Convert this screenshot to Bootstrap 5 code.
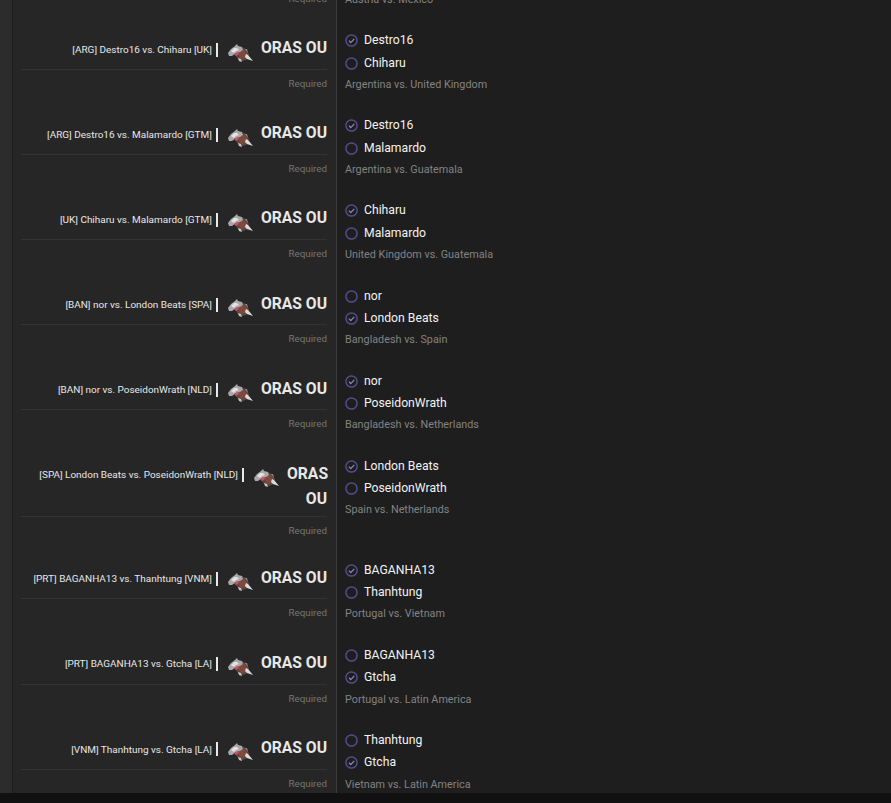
<!DOCTYPE html>
<html lang="en"><head><meta charset="utf-8"><title>Pick'em</title>
<link href="https://cdn.jsdelivr.net/npm/bootstrap@5.3.0/dist/css/bootstrap.min.css" rel="stylesheet">
<style>
html,body{height:100%;overflow:hidden;background:#111}
body{font-family:Roboto,"Noto Sans",sans-serif;color:#f0f0f0}
.shell{height:793px;overflow:hidden;background:#1e1e1e}
.strip{width:13px;background:#2c2c2c;border-right:1px solid #1c1c1c}
.feed{margin-top:-56.1px}
.lhs{width:324px;padding:6.3px 9px 17.7px 8px;background:#262626;border-right:1px solid #3c3c3c}
.rhs{padding:.5px 0 19.1px 8px;flex:1}
.head{min-height:28.7px}
.match{font-size:9.96px;line-height:25px;white-space:nowrap;color:#e8e8e8;padding-right:4px;height:25px;margin-top:1.6px}
.bar{width:2px;height:14px;background:#e8e8e8;margin:7.5px 10px 0 0;flex:none}
.poke{width:25px;height:18px;flex:none;margin:8.5px 8px 0 0}
.fmt{font-size:15.7px;font-weight:700;line-height:25px;color:#e8e8e8;text-align:right}
.fmt-narrow{width:40px;flex:none}
.rule{border-top:1px solid #333;margin:5px 0 4px}
.req{font-size:9.8px;line-height:20px;color:#757575;text-align:right}
.opt{height:22.5px;font-size:12.2px;line-height:23px;color:#f2f2f2;gap:6px}
.opt svg{width:13px;height:13px;flex:none}
.cap{font-size:10.8px;line-height:20px;color:#838383;height:20px;margin-top:.5px}
.foot{height:10px;background:#111}
</style></head><body>
<svg width="0" height="0" class="d-block"><defs>
<symbol id="pk" viewBox="0 0 25 18">
<path fill="#5d4640" d="M9 6l4-3 5 2 3 5-1 5-5 2-5-2-3-4z"/>
<path fill="#7f4a3e" d="M11 7l5-1 3 4-1 4-4 1-3-3z"/>
<path fill="#a9a9a9" d="M0 9l3-4 4-3 2-2 1 2 4 1 1 3-3 2-4 1-4 3-3 0z"/>
<path fill="#e2e2e2" d="M3 7l3-3 3 0 2 2-3 1-2 2z"/>
<path fill="#d14e68" d="M6 10l4-2 1 2-3 2z"/>
<path fill="#dcdcdc" d="M18 10l2 1 5 6-6-2-2-2z"/>
<path fill="#c9c9c9" d="M10 14l3 1 1 3-3-1z"/>
<path fill="#8e8e8e" d="M17 5l2 0 1 4z"/>
</symbol>
<symbol id="off" viewBox="0 0 14 14"><circle cx="7" cy="7" r="6" fill="none" stroke="#524d8c" stroke-width="1.6"/></symbol>
<symbol id="on" viewBox="0 0 14 14"><circle cx="7" cy="7" r="6" fill="none" stroke="#524d8c" stroke-width="1.6"/><path d="M4.2 7.2l2 2 3.8-4" fill="none" stroke="#8f8cb4" stroke-width="1.3"/></symbol>
</defs></svg>
<div class="shell d-flex">
<div class="strip flex-shrink-0"></div>
<div class="feed flex-grow-1">

<div class="d-flex"><div class="lhs"><div class="d-flex justify-content-end head"><span class="match">[AUT] Peligroso vs. Mexico [MEX]</span><span class="bar"></span><svg class="poke"><use href="#pk"/></svg><div class="fmt">ORAS OU</div></div><div class="rule"></div><div class="req">Required</div></div><div class="rhs"><div class="opt d-flex align-items-center"><svg><use href="#on"/></svg>Austria</div><div class="opt d-flex align-items-center"><svg><use href="#off"/></svg>Mexico</div><div class="cap">Austria vs. Mexico</div></div></div>

<div class="d-flex"><div class="lhs"><div class="d-flex justify-content-end head"><span class="match">[ARG] Destro16 vs. Chiharu [UK]</span><span class="bar"></span><svg class="poke"><use href="#pk"/></svg><div class="fmt">ORAS OU</div></div><div class="rule"></div><div class="req">Required</div></div><div class="rhs"><div class="opt d-flex align-items-center"><svg><use href="#on"/></svg>Destro16</div><div class="opt d-flex align-items-center"><svg><use href="#off"/></svg>Chiharu</div><div class="cap">Argentina vs. United Kingdom</div></div></div>

<div class="d-flex"><div class="lhs"><div class="d-flex justify-content-end head"><span class="match">[ARG] Destro16 vs. Malamardo [GTM]</span><span class="bar"></span><svg class="poke"><use href="#pk"/></svg><div class="fmt">ORAS OU</div></div><div class="rule"></div><div class="req">Required</div></div><div class="rhs"><div class="opt d-flex align-items-center"><svg><use href="#on"/></svg>Destro16</div><div class="opt d-flex align-items-center"><svg><use href="#off"/></svg>Malamardo</div><div class="cap">Argentina vs. Guatemala</div></div></div>

<div class="d-flex"><div class="lhs"><div class="d-flex justify-content-end head"><span class="match">[UK] Chiharu vs. Malamardo [GTM]</span><span class="bar"></span><svg class="poke"><use href="#pk"/></svg><div class="fmt">ORAS OU</div></div><div class="rule"></div><div class="req">Required</div></div><div class="rhs"><div class="opt d-flex align-items-center"><svg><use href="#on"/></svg>Chiharu</div><div class="opt d-flex align-items-center"><svg><use href="#off"/></svg>Malamardo</div><div class="cap">United Kingdom vs. Guatemala</div></div></div>

<div class="d-flex"><div class="lhs"><div class="d-flex justify-content-end head"><span class="match">[BAN] nor vs. London Beats [SPA]</span><span class="bar"></span><svg class="poke"><use href="#pk"/></svg><div class="fmt">ORAS OU</div></div><div class="rule"></div><div class="req">Required</div></div><div class="rhs"><div class="opt d-flex align-items-center"><svg><use href="#off"/></svg>nor</div><div class="opt d-flex align-items-center"><svg><use href="#on"/></svg>London Beats</div><div class="cap">Bangladesh vs. Spain</div></div></div>

<div class="d-flex"><div class="lhs"><div class="d-flex justify-content-end head"><span class="match">[BAN] nor vs. PoseidonWrath [NLD]</span><span class="bar"></span><svg class="poke"><use href="#pk"/></svg><div class="fmt">ORAS OU</div></div><div class="rule"></div><div class="req">Required</div></div><div class="rhs"><div class="opt d-flex align-items-center"><svg><use href="#on"/></svg>nor</div><div class="opt d-flex align-items-center"><svg><use href="#off"/></svg>PoseidonWrath</div><div class="cap">Bangladesh vs. Netherlands</div></div></div>

<div class="d-flex"><div class="lhs"><div class="d-flex justify-content-end head"><span class="match">[SPA] London Beats vs. PoseidonWrath [NLD]</span><span class="bar"></span><svg class="poke"><use href="#pk"/></svg><div class="fmt fmt-narrow">ORAS OU</div></div><div class="rule"></div><div class="req">Required</div></div><div class="rhs"><div class="opt d-flex align-items-center"><svg><use href="#on"/></svg>London Beats</div><div class="opt d-flex align-items-center"><svg><use href="#off"/></svg>PoseidonWrath</div><div class="cap">Spain vs. Netherlands</div></div></div>

<div class="d-flex"><div class="lhs"><div class="d-flex justify-content-end head"><span class="match">[PRT] BAGANHA13 vs. Thanhtung [VNM]</span><span class="bar"></span><svg class="poke"><use href="#pk"/></svg><div class="fmt">ORAS OU</div></div><div class="rule"></div><div class="req">Required</div></div><div class="rhs"><div class="opt d-flex align-items-center"><svg><use href="#on"/></svg>BAGANHA13</div><div class="opt d-flex align-items-center"><svg><use href="#off"/></svg>Thanhtung</div><div class="cap">Portugal vs. Vietnam</div></div></div>

<div class="d-flex"><div class="lhs"><div class="d-flex justify-content-end head"><span class="match">[PRT] BAGANHA13 vs. Gtcha [LA]</span><span class="bar"></span><svg class="poke"><use href="#pk"/></svg><div class="fmt">ORAS OU</div></div><div class="rule"></div><div class="req">Required</div></div><div class="rhs"><div class="opt d-flex align-items-center"><svg><use href="#off"/></svg>BAGANHA13</div><div class="opt d-flex align-items-center"><svg><use href="#on"/></svg>Gtcha</div><div class="cap">Portugal vs. Latin America</div></div></div>

<div class="d-flex"><div class="lhs"><div class="d-flex justify-content-end head"><span class="match">[VNM] Thanhtung vs. Gtcha [LA]</span><span class="bar"></span><svg class="poke"><use href="#pk"/></svg><div class="fmt">ORAS OU</div></div><div class="rule"></div><div class="req">Required</div></div><div class="rhs"><div class="opt d-flex align-items-center"><svg><use href="#off"/></svg>Thanhtung</div><div class="opt d-flex align-items-center"><svg><use href="#on"/></svg>Gtcha</div><div class="cap">Vietnam vs. Latin America</div></div></div>

</div></div>
<div class="foot"></div>
<script src="https://cdn.jsdelivr.net/npm/bootstrap@5.3.0/dist/js/bootstrap.bundle.min.js"></script>
</body></html>
